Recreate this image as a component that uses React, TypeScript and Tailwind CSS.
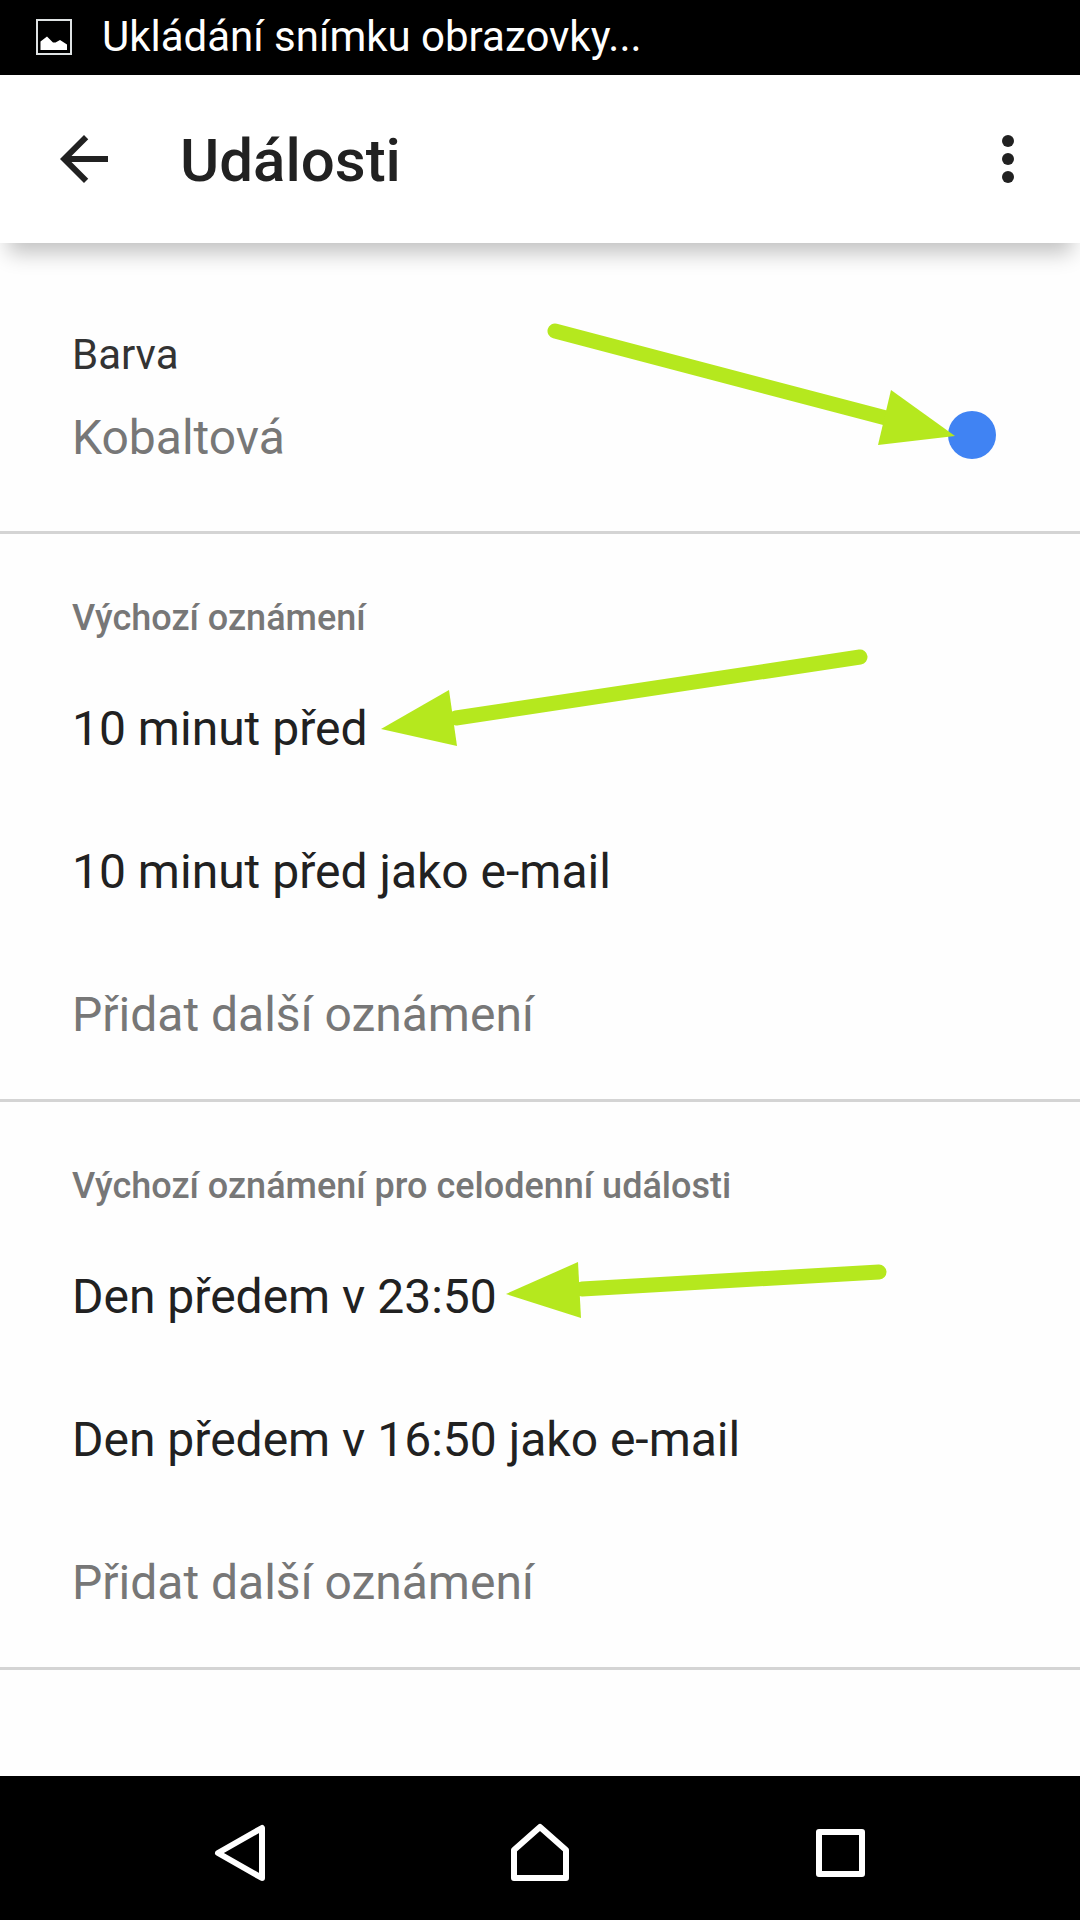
import React from "react";

const LIME = "#b5e81e";

type Point = [number, number];

type ArrowProps = {
  className: string;
  width: number;
  height: number;
  start: Point;
  neck: Point;
  head: [Point, Point, Point];
};

function Arrow({ className, width, height, start, neck, head }: ArrowProps) {
  return (
    <svg
      aria-hidden="true"
      className={className}
      width={width}
      height={height}
      viewBox={`0 0 ${width} ${height}`}
    >
      <line
        x1={start[0]}
        y1={start[1]}
        x2={neck[0]}
        y2={neck[1]}
        stroke={LIME}
        strokeWidth="15"
        strokeLinecap="round"
      />
      <polygon points={head.map((p) => p.join(",")).join(" ")} fill={LIME} />
    </svg>
  );
}

function StatusBar() {
  return (
    <div className="flex h-[75px] items-center gap-[30px] bg-black px-9 pb-0.5 text-white">
      <svg width="36" height="36" viewBox="0 0 36 36" aria-hidden="true" className="shrink-0">
        <rect x="1" y="1" width="34" height="34" fill="none" stroke="#dfe3e4" strokeWidth="2" />
        <path
          d="M4.500 31V22.500L11 17.500L17 23.500H19.500L24 21L31 25.500V31Z"
          fill="#fff"
        />
      </svg>
      <p className="text-[42px] leading-[50px]">Ukládání snímku obrazovky...</p>
    </div>
  );
}

function AppBar() {
  return (
    <header className="relative z-10 flex h-[168px] items-center bg-white px-12 shadow-[0_18px_20px_-8px_rgba(0,0,0,0.24)]">
      <button type="button" aria-label="Zpět" className="flex size-[72px] items-center justify-center">
        <svg width="72" height="72" viewBox="0 0 24 24" aria-hidden="true">
          <path
            d="M20 11H7.830l5.590-5.590L12 4l-8 8 8 8 1.410-1.410L7.830 13H20v-2z"
            fill="#212121"
          />
        </svg>
      </button>
      <h1 className="ml-[60px] flex-1 pt-1 text-[60px] font-medium leading-[72px] text-[#212121]">
        Události
      </h1>
      <button
        type="button"
        aria-label="Další možnosti"
        className="flex size-12 items-center justify-center"
      >
        <svg width="12" height="48" viewBox="0 0 12 48" fill="#212121" aria-hidden="true">
          <circle cx="6" cy="6" r="6" />
          <circle cx="6" cy="24" r="6" />
          <circle cx="6" cy="42" r="6" />
        </svg>
      </button>
    </header>
  );
}

type SectionProps = {
  title: string;
  rows: string[];
  arrow: React.ReactNode;
};

function ReminderSection({ title, rows, arrow }: SectionProps) {
  return (
    <section className="relative border-b-[3px] border-[#d4d4d4] pt-[63px] pb-[13px]">
      <h2 className="px-[72px] text-[36px] font-medium leading-[42px] text-[#777777]">{title}</h2>
      <ul className="mt-[18px]">
        {rows.map((row) => (
          <li key={row}>
            <button
              type="button"
              className="block w-full px-[72px] text-left text-[48px] leading-[143px] text-[#212121]"
            >
              {row}
            </button>
          </li>
        ))}
        <li>
          <button
            type="button"
            className="block w-full px-[72px] text-left text-[48px] leading-[143px] text-[#777777]"
          >
            Přidat další oznámení
          </button>
        </li>
      </ul>
      {arrow}
    </section>
  );
}

const navButtons = [
  { label: "Zpět", path: "M52 5V55L8 30Z" },
  { label: "Domů", path: "M4 55V27L30 4L56 27V55Z" },
  { label: "Poslední aplikace", path: "M9 9H52V51H9Z" },
];

function NavBar() {
  return (
    <nav className="grid h-36 grid-cols-3 bg-black px-[90px]">
      {navButtons.map(({ label, path }) => (
        <button
          key={label}
          type="button"
          aria-label={label}
          className="flex items-center justify-center pt-2.5"
        >
          <svg
            width="60"
            height="60"
            viewBox="0 0 60 60"
            fill="none"
            stroke="#fff"
            strokeWidth="6"
            strokeLinejoin="round"
            aria-hidden="true"
          >
            <path d={path} />
          </svg>
        </button>
      ))}
    </nav>
  );
}

export default function App() {
  return (
    <div className="flex min-h-screen flex-col bg-[#fefefe] font-['Roboto',sans-serif]">
      <StatusBar />
      <AppBar />
      <main className="flex-1">
        <section className="relative border-b-[3px] border-[#d4d4d4]">
          <button type="button" className="block w-full pt-[87px] pr-[84px] pb-[65px] pl-[72px] text-left">
            <span className="block text-[42px] leading-[50px] text-[#333333]">Barva</span>
            <span className="mt-[30px] flex items-center justify-between">
              <span className="text-[48px] leading-[56px] text-[#777777]">Kobaltová</span>
              <span className="mb-1.5 size-12 rounded-full bg-[#4083f3]" />
            </span>
          </button>
          <Arrow
            className="pointer-events-none absolute top-[77px] right-[120px]"
            width={420}
            height={130}
            start={[15, 11]}
            neck={[346, 98]}
            head={[[351, 70], [415, 116], [338, 125]]}
          />
        </section>
        <ReminderSection
          title="Výchozí oznámení"
          rows={["10 minut před", "10 minut před jako e-mail"]}
          arrow={
            <Arrow
              className="pointer-events-none absolute top-[106px] left-[370px]"
              width={510}
              height={110}
              start={[490, 17]}
              neck={[86, 78]}
              head={[[79, 50], [11, 89], [87, 106]]}
            />
          }
        />
        <ReminderSection
          title="Výchozí oznámení pro celodenní události"
          rows={["Den předem v 23:50", "Den předem v 16:50 jako e-mail"]}
          arrow={
            <Arrow
              className="pointer-events-none absolute top-[148px] left-[500px]"
              width={400}
              height={80}
              start={[379, 22]}
              neck={[82, 39]}
              head={[[78, 12], [6, 44], [81, 68]]}
            />
          }
        />
      </main>
      <NavBar />
    </div>
  );
}
